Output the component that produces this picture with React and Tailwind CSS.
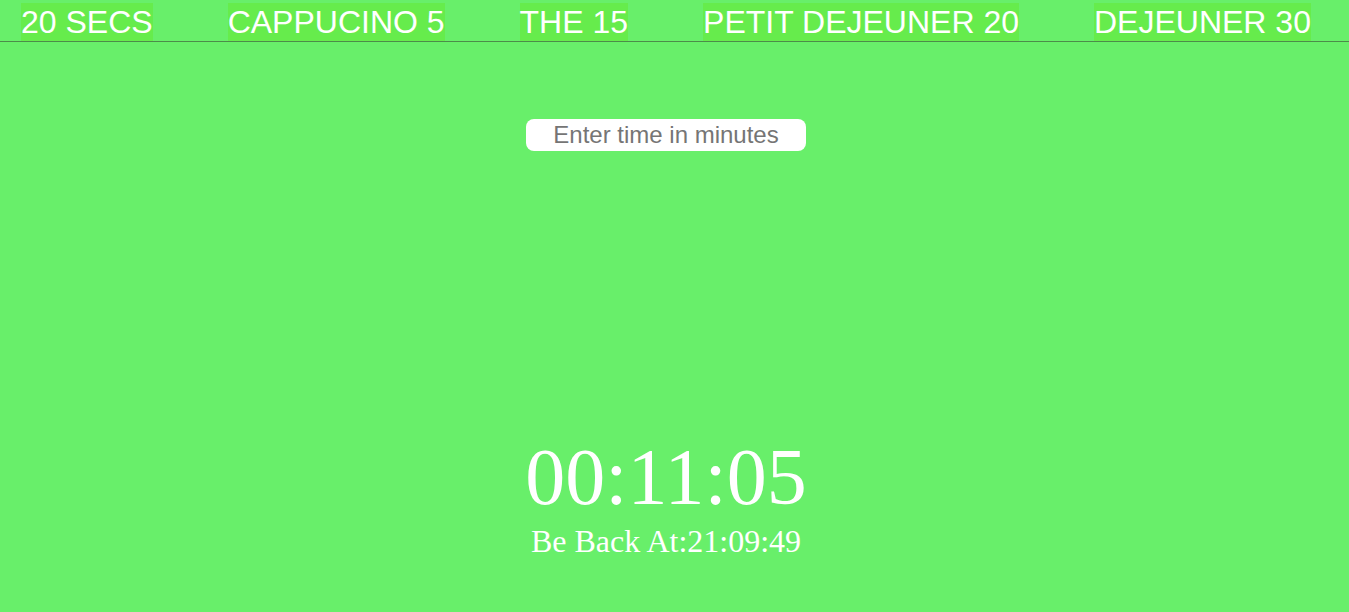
import {useState} from 'react';

const breaks = [
    {label: "20 SECS"},
    {label: "CAPPUCINO 5"},
    {label: "THE 15"},
    {label: "PETIT DEJEUNER 20"},
    {label: "DEJEUNER 30"},
]

export default function App() {

    const [minutes, setMinutes] = useState("")

    return (
        <div className="bg-[#68ef6a] min-h-screen flex flex-col" style={{minHeight: 612}}>
            <nav className="h-[42px] flex items-end gap-[75px] pl-[21px] border-b border-[#4c8c4a]">
                {breaks.map((b) => (
                    <button
                        key={b.label}
                        className="h-[38px] bg-[#66ec4c] text-white text-[32px] leading-[38px] font-['Liberation_Sans',Arial,sans-serif] cursor-pointer"
                    >
                        {b.label}
                    </button>
                ))}
            </nav>

            {/* centred as if a scrollbar were taking 17px on the right */}
            <div className="flex justify-center mt-[77px] pr-[17px]">
                <input
                    type="text"
                    className="w-[280px] h-[32px] bg-white rounded-[8px] text-center text-[24px] text-[#333] placeholder:text-[#757575] outline-none font-['Liberation_Sans',Arial,sans-serif]"
                    value={minutes}
                    onChange={(e) => setMinutes(e.target.value)}
                    placeholder="Enter time in minutes"
                />
            </div>

            <div className="flex flex-col items-center mt-[282px] pr-[17px] text-white font-['Liberation_Serif','Times_New_Roman',serif]">
                <p className="text-[80px] leading-[88px]">00:11:05</p>
                <p className="text-[32px] leading-[36px] mt-[2px]">Be Back At:21:09:49</p>
            </div>
        </div>
    );
}
